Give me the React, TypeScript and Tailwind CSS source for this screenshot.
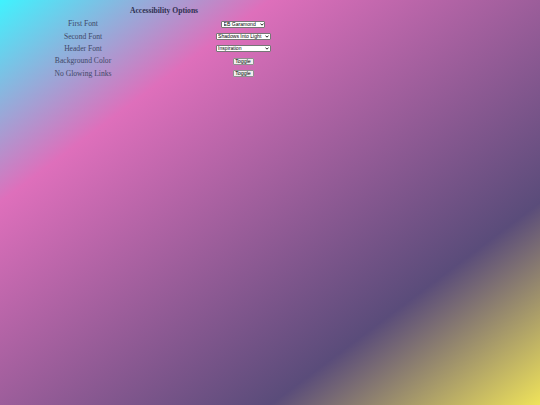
import React from "react";

const serif = { fontFamily: '"Liberation Serif", "DejaVu Serif", serif' };

function Select({ width, value }: { width: string; value: string }) {
  return (
    <div className={`relative h-[7px] ${width}`}>
      <select
        defaultValue={value}
        className="appearance-none block w-full h-[7px] bg-white border border-[#767676] rounded-[1px] pl-[1.5px] pr-[5px] py-0 text-[5.1px] leading-[5px] text-black font-['Liberation_Sans',sans-serif]"
      >
        <option value={value}>{value}</option>
      </select>
      <svg
        className="absolute right-[1.5px] top-[2px] w-[4px] h-[3px] pointer-events-none"
        viewBox="0 0 8 6"
        fill="none"
        stroke="#111"
        strokeWidth="1.8"
      >
        <path d="M1 1.2 L4 4.4 L7 1.2" />
      </svg>
    </div>
  );
}

function Toggle() {
  return (
    <button className="w-[21px] h-[7px] bg-[#efefef] border border-[#8f8f8f] rounded-[1px] p-0 text-[5.3px] leading-[5px] text-black font-['Liberation_Sans',sans-serif]">
      Toggle
    </button>
  );
}

export default function App() {
  const rows: { label: string; control: React.ReactNode }[] = [
    { label: "First Font", control: <Select width="w-[44px]" value="EB Garamond" /> },
    { label: "Second Font", control: <Select width="w-[55px]" value="Shadows Into Light" /> },
    { label: "Header Font", control: <Select width="w-[55px]" value="Inspiration" /> },
    { label: "Background Color", control: <Toggle /> },
    { label: "No Glowing Links", control: <Toggle /> },
  ];

  return (
    <div className="min-h-screen w-full bg-[linear-gradient(to_bottom_right,#3ff3fe_0%,#de6fbb_25%,#5a4c7a_75%,#efe35a_100%)]">
      <div className="w-[328px] pt-[5.5px]" style={serif}>
        <div className="h-[10px] leading-[10px] text-center whitespace-nowrap text-[7.6px] font-bold text-[#2f3050]">
          Accessibility Options
        </div>
        <div className="mt-[2.5px] grid grid-cols-[166px_154px]">
          {rows.map((r) => (
            <React.Fragment key={r.label}>
              <div className="h-[12.3px] flex items-center justify-center text-[7.6px] text-[#3f4868] whitespace-nowrap">
                {r.label}
              </div>
              <div className="h-[12.3px] flex items-center justify-center">{r.control}</div>
            </React.Fragment>
          ))}
        </div>
      </div>
    </div>
  );
}
